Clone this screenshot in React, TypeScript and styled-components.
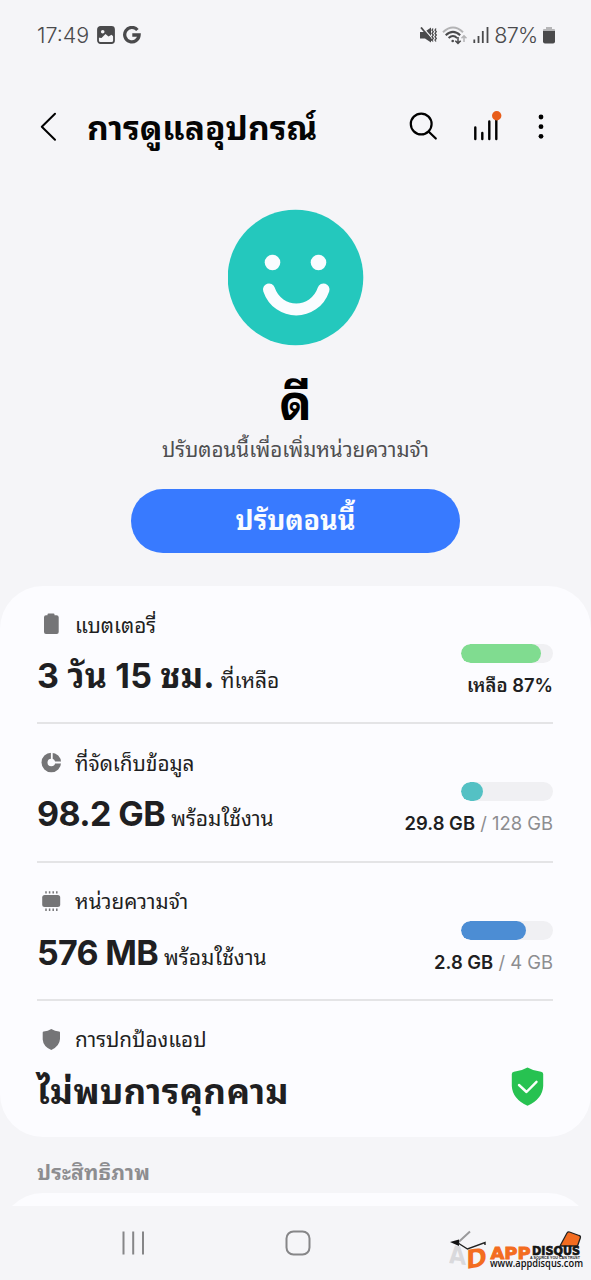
import React from "react";
import styled, { createGlobalStyle } from "styled-components";

const GlobalStyle = createGlobalStyle`
  * { box-sizing: border-box; }
  body {
    margin: 0;
    background: #f5f5f8;
    font-family: Inter, "Noto Sans Thai Looped", "Noto Sans Thai", "Noto Sans", sans-serif;
    color: #1f1f22;
  }
  svg { display: block; flex: none; }
`;

const Screen = styled.div`
  width: 591px;
  height: 1280px;
  overflow: hidden;
  display: flex;
  flex-direction: column;
  background: #f5f5f8;
`;

const StatusBar = styled.header`
  height: 70px;
  padding: 0 36px 0 37px;
  display: flex;
  align-items: center;
  justify-content: space-between;
  color: #4a4a4c;
`;

const StatusGroup = styled.div<{ $gap: number }>`
  display: flex;
  align-items: center;
  gap: ${(p) => p.$gap}px;
`;

const StatusText = styled.span<{ $spacing: number }>`
  font-size: 21.5px;
  font-weight: 360;
  line-height: 26px;
  letter-spacing: ${(p) => p.$spacing}px;
`;

const AppBar = styled.div`
  height: 114px;
  padding: 0 46px 0 35px;
  display: flex;
  align-items: center;
`;

const PageTitle = styled.h1`
  margin: 1px auto 0 25px;
  font-size: 33.5px;
  line-height: 48px;
  font-weight: 700;
  color: #050505;
  white-space: nowrap;
`;

const Actions = styled.div`
  display: flex;
  align-items: center;
  gap: 33px;
`;

const Hero = styled.section`
  height: 402px;
  padding-top: 25px;
  display: flex;
  flex-direction: column;
  align-items: center;
`;

const Grade = styled.h2`
  margin: 26px 0 0;
  height: 61px;
  line-height: 62px;
  font-size: 48px;
  font-weight: 700;
  color: #000;
`;

const Hint = styled.p`
  margin: 0;
  height: 34px;
  line-height: 34px;
  font-size: 20.6px;
  color: #4e4e50;
  white-space: nowrap;
`;

const OptimizeButton = styled.button`
  margin-top: 22px;
  width: 329px;
  height: 64px;
  border: 0;
  border-radius: 32px;
  background: #387aff;
  color: #fafcff;
  font: inherit;
  font-size: 27px;
  font-weight: 700;
  line-height: 64px;
  padding: 0;
`;

const Card = styled.main`
  height: 551px;
  flex: none;
  padding: 0 38px 0 37px;
  background: #fcfcff;
  border-radius: 43px;
`;

const Row = styled.section`
  height: 138.3px;
  display: flex;
  justify-content: space-between;
  &:not(:last-child) { border-bottom: 2px solid #e4e4e6; }
`;

const Info = styled.div`
  padding-top: 22px;
`;

const Label = styled.div`
  height: 32px;
  display: flex;
  align-items: center;
  gap: 9px;
  font-size: 20.7px;
  white-space: nowrap;
  span { padding-bottom: 2px; }
`;

const Value = styled.div`
  height: 56px;
  margin-top: 8px;
  line-height: 56px;
  white-space: nowrap;
`;

const Amount = styled.strong<{ $size?: number; $spacing?: number }>`
  font-size: ${(p) => p.$size ?? 34}px;
  font-weight: 700;
  letter-spacing: ${(p) => p.$spacing ?? 0}px;
`;

const Note = styled.span`
  margin-left: 6px;
  font-size: 21px;
`;

const Usage = styled.div`
  padding-top: 58px;
  display: flex;
  flex-direction: column;
  align-items: flex-end;
`;

const Track = styled.div`
  width: 92px;
  height: 19px;
  border-radius: 10px;
  overflow: hidden;
  background: #f0f0f3;
`;

const Fill = styled.div<{ $color: string }>`
  height: 100%;
  border-radius: 10px;
  background: ${(p) => p.$color};
`;

const UsageText = styled.div`
  margin-top: 8px;
  height: 28px;
  line-height: 28px;
  font-size: 18.4px;
  color: #8d8d90;
  white-space: nowrap;
  b { font-weight: 600; color: #1f1f22; }
`;

const ShieldSlot = styled.div`
  padding: 66px 8px 0 0;
`;

const SectionTitle = styled.h3`
  margin: 0;
  height: 56px;
  flex: none;
  padding: 20px 37px 0;
  font-size: 21px;
  letter-spacing: 0.2px;
  line-height: 32px;
  font-weight: 700;
  color: #8d8d90;
`;

const Peek = styled.div`
  height: 13px;
  flex: none;
  overflow: hidden;
  &::before {
    content: "";
    display: block;
    height: 90px;
    border-radius: 43px;
    background: #fcfcff;
  }
`;

const NavBar = styled.nav`
  position: relative;
  height: 74px;
  flex: none;
  display: flex;
  align-items: center;
  justify-content: space-between;
  padding: 0 116px 0 120px;
`;

const Watermark = styled.div`
  position: absolute;
  right: 6px;
  top: 22px;
`;

const ImageIcon = () => (
  <svg width="18" height="18" viewBox="0 0 18 18">
    <rect x="1" y="1" width="16" height="16" rx="2.5" fill="none" stroke="#4a4a4c" strokeWidth="1.8" />
    <path d="M1 2h16v9l-2.500-2.300-3 1.800-3-2.500L4.500 12 1 11.500z" fill="#4a4a4c" />
    <circle cx="5.7" cy="5.7" r="1.8" fill="#f5f5f8" />
  </svg>
);

const GIcon = () => (
  <svg width="18" height="18" viewBox="0 0 18 18">
    <path d="M14.4 4A7.2 7.2 0 1 0 16.1 9H9.3" fill="none" stroke="#4a4a4c" strokeWidth="3.3" />
  </svg>
);

const MuteIcon = () => (
  <svg width="17" height="17" viewBox="0 0 17 17" fill="none" stroke="#4a4a4c">
    <path d="M0 5h4.500L11 .500v15l-6-4H0z" fill="#4a4a4c" stroke="none" />
    <path d="M2.300 0l11 12.500" stroke="#f5f5f8" strokeWidth="1.300" />
    <path d="M1 .500l11 13" strokeWidth="1.8" />
    <path d="M13 1.500l-1 1.600 1.300 1.600-1.300 1.700 1.300 1.600-1.300 1.700 1.300 1.600-1.300 1.700 1 1.500M16 1.500l-1 1.600 1.300 1.600-1.300 1.700 1.300 1.600-1.300 1.700 1.300 1.600-1.300 1.700 1 1.500" strokeWidth="1.3" />
  </svg>
);

const WifiIcon = () => (
  <svg width="25" height="19" viewBox="0 0 25 19" fill="none" stroke="#4a4a4c" strokeWidth="2">
    <path d="M1 6.2Q11 -3.3 21 6.2" stroke="#b3b3b5" />
    <path d="M3.7 9.3Q11 2.4 18.2 9.3M6.6 12.1Q11 8 15.2 12.1" />
    <circle cx="10.7" cy="15" r="1.3" fill="#4a4a4c" stroke="none" />
    <path d="M16 11v6M13.3 14.7L16 17.4l2.7-2.7" strokeWidth="1.5" />
    <path d="M22 16v-6M19.5 12.3L22 9.8l2.5 2.5" stroke="#b3b3b5" strokeWidth="1.5" />
  </svg>
);

const SignalIcon = () => (
  <svg width="16" height="18" viewBox="0 0 16 18" stroke="#4a4a4c" strokeWidth="1.8">
    <path d="M1.3 17v-3.5M5.5 17v-7M9.8 17V5M14.5 17V1" />
  </svg>
);

const StatusBattery = () => (
  <svg width="12" height="18" viewBox="0 0 12 18">
    <path d="M3 1h6v2h2q1 0 1 1v3H0V4q0-1 1-1h2z" fill="#b5b5b7" />
    <path d="M0 5h12v10.5q0 2-2 2H2q-2 0-2-2z" fill="#4a4a4c" />
  </svg>
);

const BackIcon = () => (
  <svg width="27" height="32" viewBox="0 0 27 32">
    <path d="M20 2.700L6.8 15.700 20 28.700" fill="none" stroke="#000" strokeWidth="2" strokeLinecap="round" strokeLinejoin="round" />
  </svg>
);

const SearchIcon = () => (
  <svg width="32" height="32" viewBox="0 0 32 32" fill="none" stroke="#000" strokeWidth="2.2" strokeLinecap="round">
    <circle cx="14.200" cy="13" r="10.4" />
    <path d="M21.8 20.700l7 6.800" />
  </svg>
);

const StatsIcon = () => (
  <svg width="32" height="36" viewBox="0 0 32 36" stroke="#000" strokeWidth="2.4" strokeLinecap="round">
    <path d="M3.300 18.500V30M10.300 24V30M17.300 12.500V30M24.300 11V30" />
    <circle cx="24.700" cy="6.700" r="4.700" fill="#e85d1a" stroke="none" />
  </svg>
);

const MoreIcon = () => (
  <svg width="8" height="32" viewBox="0 0 8 32">
    <circle cx="4" cy="6" r="2.4" />
    <circle cx="4" cy="15.7" r="2.4" />
    <circle cx="4" cy="25.3" r="2.4" />
  </svg>
);

const Smile = () => (
  <svg width="136" height="137" viewBox="0 0 136 137">
    <circle cx="67.500" cy="68.500" r="67.800" fill="#24c8bd" />
    <circle cx="44.500" cy="53.500" r="7.800" fill="#fafcff" />
    <circle cx="90.500" cy="53.500" r="7.800" fill="#fafcff" />
    <path d="M41 80.500C50 107 86.500 107 95.500 80.500" fill="none" stroke="#fafcff" strokeWidth="12" strokeLinecap="round" />
  </svg>
);

const BatteryIcon = () => (
  <svg width="29" height="24" viewBox="0 0 29 24">
    <path d="M10.500 2.500Q10.500 1.500 11.500 1.500h5Q17.500 1.500 17.500 2.500V3.200h2Q21.700 3.200 21.700 5.200V20Q21.700 22 19.700 22H9Q7 22 7 20V5.200Q7 3.200 9 3.200h1.500z" fill="#757577" />
  </svg>
);

const StorageIcon = () => (
  <svg width="29" height="24" viewBox="0 0 29 24">
    <circle cx="14.300" cy="12.500" r="6.800" fill="none" stroke="#757577" strokeWidth="6" />
    <path d="M14.800 12.500V0M14.800 12.500H29" stroke="#fcfcff" strokeWidth="1.800" />
  </svg>
);

const MemoryIcon = () => (
  <svg width="29" height="24" viewBox="0 0 29 24">
    <rect x="5.200" y="6" width="18" height="12" rx="2.500" fill="#757577" />
    <path d="M9 2.200v2.400M12.600 2.200v2.400M16.200 2.200v2.400M19.800 2.200v2.400M9 19.500v2.400M12.600 19.500v2.400M16.200 19.500v2.400M19.800 19.500v2.400" stroke="#757577" strokeWidth="1.500" />
  </svg>
);

const ShieldIcon = () => (
  <svg width="29" height="24" viewBox="0 0 29 24">
    <path d="M14.300 2Q18 4.200 22 4.600Q23 4.800 23 5.600v6.500Q22.500 19.500 14.300 23Q6.200 19.500 5.700 12.500V5.600Q5.700 4.800 6.700 4.600Q11 4.200 14.300 2z" fill="#757577" />
  </svg>
);

const SafeShield = () => (
  <svg width="34" height="40" viewBox="0 0 34 40">
    <path d="M16.500 .500Q23 4.300 30 4.700Q32.200 5 32.200 7V19Q31.500 32 16.500 38.800Q1.500 32 .800 19V7Q.800 5 3 4.700Q10 4.300 16.500 .500z" fill="#27c251" />
    <path d="M8 18l7.500 7L25.500 14.800" fill="none" stroke="#fafffb" strokeWidth="2.400" strokeLinecap="round" strokeLinejoin="round" />
  </svg>
);

const RecentsIcon = () => (
  <svg width="26" height="26" viewBox="0 0 26 26" stroke="#868688" strokeWidth="2">
    <path d="M3.500 1.500v23M13.200 1.500v23M23 1.500v23" />
  </svg>
);

const HomeIcon = () => (
  <svg width="26" height="26" viewBox="0 0 26 26">
    <rect x="1.500" y="1.500" width="23" height="23" rx="7" fill="none" stroke="#868688" strokeWidth="2" />
  </svg>
);

const NavBack = () => (
  <svg width="26" height="26" viewBox="0 0 26 26">
    <path d="M21 1.500L8.500 13l12.500 11.500" fill="none" stroke="#9a9a9c" strokeWidth="2" />
  </svg>
);

const Logo = () => (
  <svg width="136" height="46" viewBox="0 0 136 46">
    <path d="M1 15.500L9 15 18.500 21.500 36 15V37L20 41 1 36z" fill="#f5f5f8" />
    <text transform="translate(0 35) skewY(7)" fontFamily="DejaVu Sans" fontWeight="700" fontSize="25" textLength="17" lengthAdjust="spacingAndGlyphs" fill="#d9d9dc">A</text>
    <text transform="translate(17 41) skewY(-9)" fontFamily="DejaVu Sans" fontWeight="700" fontSize="26" textLength="21" lengthAdjust="spacingAndGlyphs" fill="#f36c21">D</text>
    <path d="M1 14L10 11.500V18z" fill="#111" />
    <path d="M9 15L18.500 21 36 14.500V17" fill="none" stroke="#222" strokeWidth="1.400" />
    <path d="M111 18L118 5Q119 3.500 120.500 4L130 7.500Q132 8 131.300 10L128.500 18z" fill="#f36c21" stroke="#222" strokeWidth="1.300" />
    <text x="41.500" y="30.500" fontFamily="DejaVu Sans" fontWeight="700" fontSize="16.500" textLength="40" lengthAdjust="spacingAndGlyphs" fill="#f36c21" stroke="#f36c21" strokeWidth=".9">APP</text>
    <text x="83" y="27" fontFamily="DejaVu Sans" fontWeight="700" fontSize="12" textLength="48" lengthAdjust="spacingAndGlyphs" fill="#151515" stroke="#151515" strokeWidth=".7">DISQUS</text>
    <text x="81" y="31.300" fontFamily="Liberation Sans" fontWeight="700" fontSize="4.300" textLength="50" lengthAdjust="spacingAndGlyphs" fill="#222">A SOURCE YOU CAN TRUST</text>
    <text x="41" y="39" fontFamily="Open Sans" fontWeight="600" fontSize="10.500" textLength="93" lengthAdjust="spacingAndGlyphs" fill="#111">www.appdisqus.com</text>
  </svg>
);

function Meter({ percent, color, children }: { percent: number; color: string; children: React.ReactNode }) {
  return (
    <Usage>
      <Track><Fill $color={color} style={{ width: `${percent}%` }} /></Track>
      <UsageText>{children}</UsageText>
    </Usage>
  );
}

export default function App() {
  return (
    <Screen>
      <GlobalStyle />
      <StatusBar>
        <StatusGroup $gap={8}>
          <StatusText $spacing={0}>17:49</StatusText>
          <ImageIcon />
          <GIcon />
        </StatusGroup>
        <StatusGroup $gap={5.5}>
          <MuteIcon />
          <WifiIcon />
          <SignalIcon />
          <StatusText $spacing={-0.7}>87%</StatusText>
          <StatusBattery />
        </StatusGroup>
      </StatusBar>
      <AppBar>
        <BackIcon />
        <PageTitle>การดูแลอุปกรณ์</PageTitle>
        <Actions>
          <SearchIcon />
          <StatsIcon />
          <MoreIcon />
        </Actions>
      </AppBar>
      <Hero>
        <Smile />
        <Grade>ดี</Grade>
        <Hint>ปรับตอนนี้เพื่อเพิ่มหน่วยความจำ</Hint>
        <OptimizeButton>ปรับตอนนี้</OptimizeButton>
      </Hero>
      <Card>
        <Row>
          <Info>
            <Label><BatteryIcon /><span>แบตเตอรี่</span></Label>
            <Value><Amount $spacing={0.2}>3 วัน 15 ชม.</Amount><Note>ที่เหลือ</Note></Value>
          </Info>
          <Meter percent={87} color="#80dc90"><b>เหลือ 87%</b></Meter>
        </Row>
        <Row>
          <Info>
            <Label><StorageIcon /><span>ที่จัดเก็บข้อมูล</span></Label>
            <Value><Amount $spacing={-0.6}>98.2 GB</Amount><Note>พร้อมใช้งาน</Note></Value>
          </Info>
          <Meter percent={24} color="#54c1c4"><b>29.8 GB</b> / 128 GB</Meter>
        </Row>
        <Row>
          <Info>
            <Label><MemoryIcon /><span>หน่วยความจำ</span></Label>
            <Value><Amount $spacing={-0.7}>576 MB</Amount><Note>พร้อมใช้งาน</Note></Value>
          </Info>
          <Meter percent={71} color="#4c8dd4"><b>2.8 GB</b> / 4 GB</Meter>
        </Row>
        <Row>
          <Info>
            <Label><ShieldIcon /><span>การปกป้องแอป</span></Label>
            <Value><Amount $size={35} $spacing={0.3}>ไม่พบการคุกคาม</Amount></Value>
          </Info>
          <ShieldSlot><SafeShield /></ShieldSlot>
        </Row>
      </Card>
      <SectionTitle>ประสิทธิภาพ</SectionTitle>
      <Peek />
      <NavBar>
        <RecentsIcon />
        <HomeIcon />
        <NavBack />
        <Watermark><Logo /></Watermark>
      </NavBar>
    </Screen>
  );
}
